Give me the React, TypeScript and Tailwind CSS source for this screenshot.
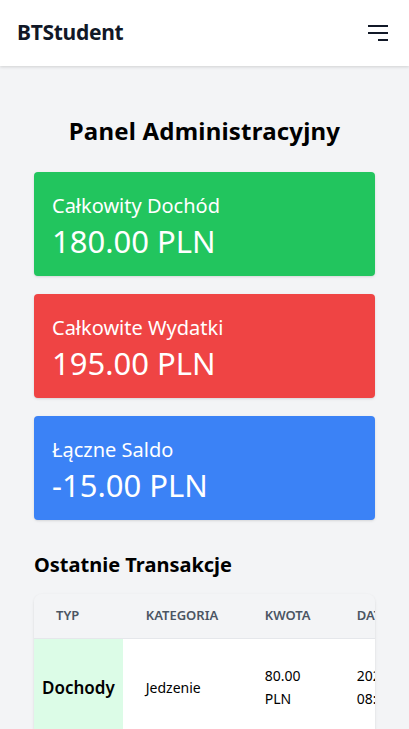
import React from "react"

const stats = [
  { label: "Całkowity Dochód", value: "180.00 PLN", color: "bg-[#22c55e]" },
  { label: "Całkowite Wydatki", value: "195.00 PLN", color: "bg-[#ef4444]" },
  { label: "Łączne Saldo", value: "-15.00 PLN", color: "bg-[#3b82f6]" },
]

export default function App() {
  return (
    <div className="min-h-screen bg-[#f3f4f6] text-black" style={{ fontFamily: '"Noto Sans", "Open Sans", sans-serif' }}>
      <header className="h-[66px] bg-white flex items-center justify-between pl-[17px] pr-[20px] shadow-[0_1px_3px_rgba(0,0,0,0.15)]">
        <span className="text-[21px] font-bold tracking-[-0.3px] text-[#111827]">BTStudent</span>
        <svg width="22" height="20" viewBox="0 0 22 20" className="text-[#111827]">
          <path d="M1 3h20M1 10h20M11 17h10" stroke="currentColor" strokeWidth="2" />
        </svg>
      </header>

      <main className="px-[34px] pt-[47px]">
        <h1 className="text-center text-[24px] font-bold tracking-[0.2px] mb-[23px]">Panel Administracyjny</h1>

        <div className="flex flex-col gap-[18px]">
          {stats.map((s) => (
            <div key={s.label} className={`${s.color} rounded-[4px] h-[104px] px-[18px] pt-[20px] text-white shadow-sm`}>
              <div className="text-[20px] leading-[28px]">{s.label}</div>
              <div className="text-[31px] leading-[42px]">{s.value}</div>
            </div>
          ))}
        </div>

        <h2 className="text-[20px] font-bold mt-[30px] mb-[14px]">Ostatnie Transakcje</h2>

        <div className="bg-white rounded-[8px] overflow-x-auto shadow-sm">
          <table className="w-max border-collapse text-left">
            <thead className="bg-[#f3f4f6]">
              <tr className="h-[44px] text-[13px] font-semibold text-[#4b5563] uppercase">
                <th className="px-[22px] font-semibold w-[88px]">Typ</th>
                <th className="px-[23px] font-semibold w-[119px]">Kategoria</th>
                <th className="px-[23px] font-semibold w-[92px]">Kwota</th>
                <th className="px-[23px] font-semibold">Data</th>
              </tr>
            </thead>
            <tbody>
              <tr className="h-[98px] border-t border-[#e5e7eb]">
                <td className="bg-[#dcfce7] px-[8px] text-[17px] font-semibold">Dochody</td>
                <td className="px-[23px] text-[14px]">Jedzenie</td>
                <td className="px-[23px] text-[14px] leading-[23px] w-[92px]">80.00 PLN</td>
                <td className="px-[23px] text-[14px] leading-[23px]">2025-05-20<br />08:15</td>
              </tr>
            </tbody>
          </table>
        </div>
      </main>
    </div>
  )
}
